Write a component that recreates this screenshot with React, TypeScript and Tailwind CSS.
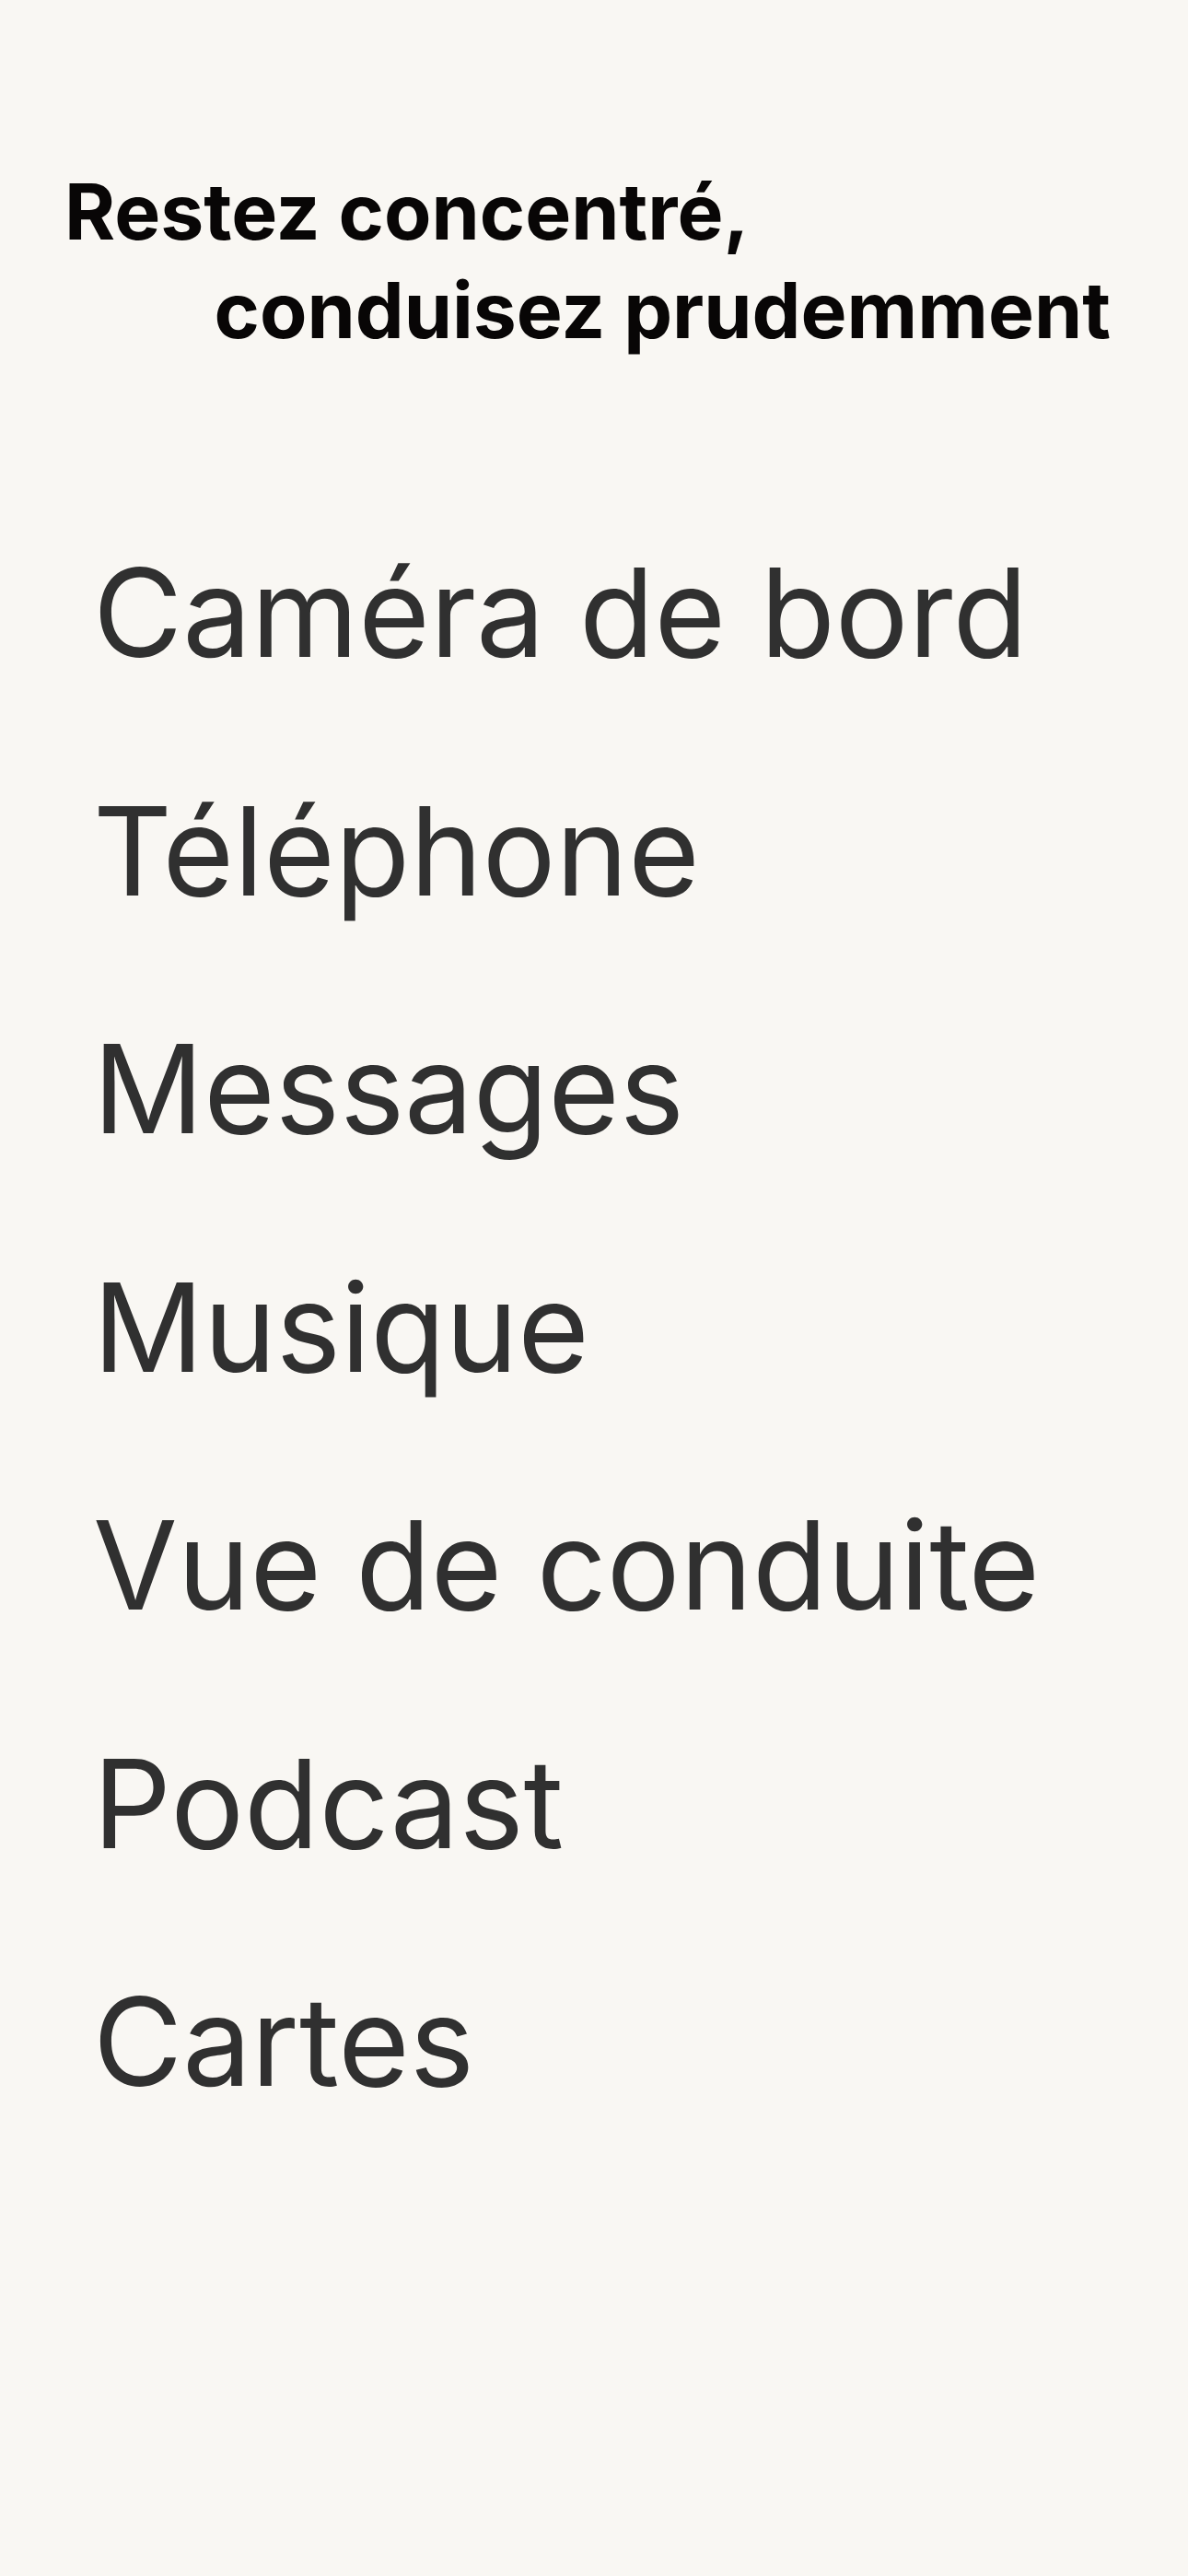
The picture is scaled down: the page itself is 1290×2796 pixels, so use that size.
import React from "react";

const items = ["Caméra de bord", "Téléphone", "Messages", "Musique", "Vue de conduite", "Podcast", "Cartes"];

function App() {
    return (
        <div className="min-h-screen w-full bg-[#f9f7f3] font-['Inter',_sans-serif]">
            <div className="flex flex-col pl-[70px] pr-[84px] pt-[176px] text-[84px] font-bold leading-[107px] text-[#080606]">
                <span>Restez concentré,</span>
                <span className="self-end">conduisez prudemment</span>
            </div>
            <ul className="mt-[208px] flex flex-col gap-[125.5px] pl-[101px] text-[133px] leading-none text-[#303030]">
                {items.map((item) => (
                    <li key={item}>{item}</li>
                ))}
            </ul>
        </div>
    );
}

export default App;
